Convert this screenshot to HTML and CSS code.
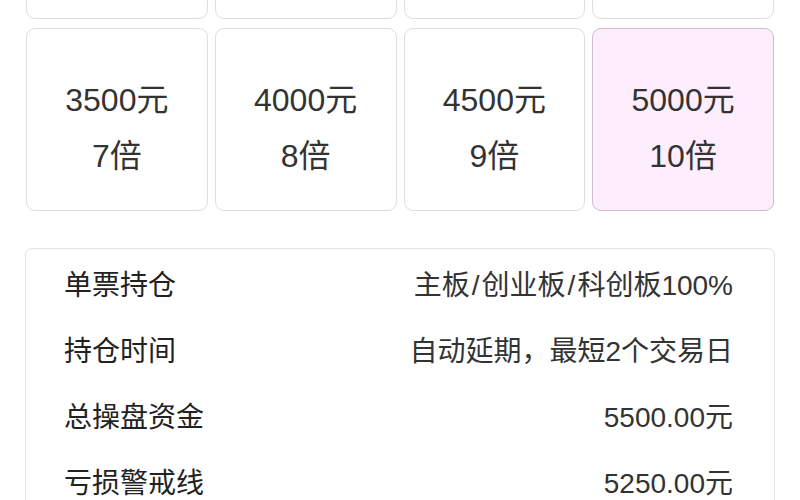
FILE: index.html
```html
<!DOCTYPE html>
<html lang="zh-CN">
<head>
    <meta charset="UTF-8">
    <meta name="viewport" content="width=device-width, initial-scale=1.0">
    <title>配资方案</title>
    <link rel="stylesheet" href="styles.css">
</head>
<body>

    <div class="page">
        <!-- 倍数选择，上一排已滚出屏幕 -->
        <div class="plans">
            <div class="plan"></div>
            <div class="plan"></div>
            <div class="plan"></div>
            <div class="plan"></div>
            <div class="plan"><span>3500元</span><span>7倍</span></div>
            <div class="plan"><span>4000元</span><span>8倍</span></div>
            <div class="plan"><span>4500元</span><span>9倍</span></div>
            <div class="plan active"><span>5000元</span><span>10倍</span></div>
        </div>

        <!-- 方案详情 -->
        <div class="detail">
            <div class="detail-row">
                <span class="label">单票持仓</span>
                <span class="value">主板<span class="sep">/</span>创业板<span class="sep">/</span>科创板100%</span>
            </div>
            <div class="detail-row">
                <span class="label">持仓时间</span>
                <span class="value">自动延期，最短2个交易日</span>
            </div>
            <div class="detail-row">
                <span class="label">总操盘资金</span>
                <span class="value">5500.00元</span>
            </div>
            <div class="detail-row">
                <span class="label">亏损警戒线</span>
                <span class="value">5250.00元</span>
            </div>
        </div>
    </div>

</body>
</html>
```

FILE: styles.css
```css
body { margin: 0; padding: 0; background: #fff; color: #333; font-family: "Liberation Sans", "Noto Sans CJK SC", sans-serif; font-size: 28px; }
.page { padding: 0 25px; margin-top: -164px; }

.plans { display: grid; grid-template-columns: repeat(4, 1fr); column-gap: 7px; row-gap: 9px; padding: 0 1px; }
.plan { height: 183px; box-sizing: border-box; border: 1px solid #dedede; border-radius: 9px; background: #fff; display: flex; flex-direction: column; align-items: center; justify-content: center; padding-top: 17px; font-size: 32px; line-height: 56px; }
.plan.active { background: #fdedfd; border-color: #cbbfcb; }

.detail { margin-top: 37px; border: 1px solid #e3e3e3; border-radius: 7px; padding: 1px 41px 0 38px; }
.detail-row { display: flex; justify-content: space-between; align-items: center; height: 66px; }
.label { color: #222; }
.value { color: #333; }
.sep { padding: 0 2px; }
```
